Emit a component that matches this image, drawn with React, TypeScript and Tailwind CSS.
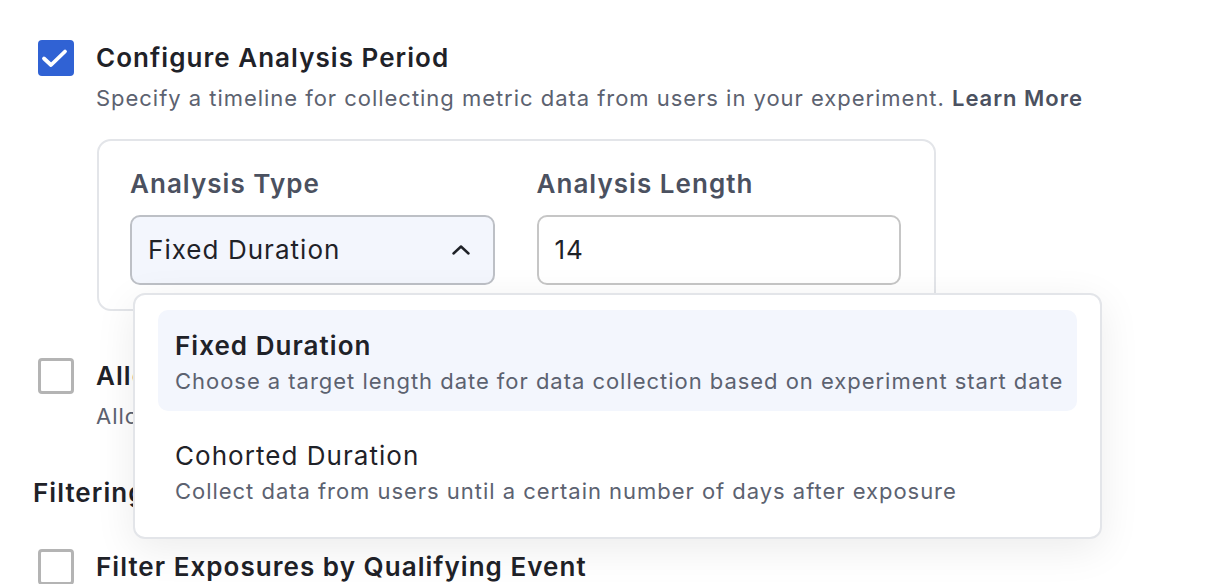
import { useState } from "react"

const options = [
  {
    id: "fixed",
    title: "Fixed Duration",
    description: "Choose a target length date for data collection based on experiment start date",
  },
  {
    id: "cohorted",
    title: "Cohorted Duration",
    description: "Collect data from users until a certain number of days after exposure",
  },
]

function Checkbox({ checked }: { checked?: boolean }) {
  if (checked) {
    return (
      <div className="h-[36px] w-[36px] shrink-0 rounded-[4px] bg-[#3062d4]">
        <svg width="36" height="36" viewBox="0 0 36 36" fill="none">
          <path d="M6 18.5 L13 25 L27 11.5" stroke="white" strokeWidth="3.8" strokeLinecap="round" strokeLinejoin="round" />
        </svg>
      </div>
    )
  }
  return <div className="h-[36px] w-[36px] shrink-0 rounded-[4px] border-[3px] border-[#b4b4b4] bg-white" />
}

export default function App() {
  const [selected] = useState("fixed")

  return (
    <div
      className="relative h-[584px] w-[1214px] overflow-hidden bg-white pl-[38px] pt-[40px] text-[#1f2228]"
      style={{ fontFamily: "Inter, 'Noto Sans', sans-serif" }}
    >
      <div className="flex gap-[22px]">
        <Checkbox checked />
        <div className="flex flex-col">
          <p className="text-[26px] font-semibold leading-[36px] tracking-[0.04em]">Configure Analysis Period</p>
          <p className="mt-[2px] text-[22px] leading-[40px] tracking-[0.044em] text-[#5c6270]">
            Specify a timeline for collecting metric data from users in your experiment.{" "}
            <span className="font-semibold text-[#4b5160]">Learn More</span>
          </p>
          <div className="mt-[21px] ml-px w-[839px] rounded-[14px] border-2 border-[#e3e5e9] pl-[31px] pr-[33px] pt-[25px] pb-[24px]">
            <div className="grid grid-cols-2 gap-[42px]">
              <div className="flex flex-col">
                <label className="text-[26px] font-semibold leading-[36px] tracking-[0.04em] text-[#4b5160]">Analysis Type</label>
                <div className="mt-[13px] flex h-[70px] items-center justify-between rounded-[10px] border-2 border-[#bdc0c6] bg-[#f3f6fd] pl-[16px] pr-[23px]">
                  <span className="text-[26px] leading-[36px] tracking-[0.04em]">Fixed Duration</span>
                  <svg width="18" height="10" viewBox="0 0 18 10" fill="none">
                    <path d="M1.5 8.5 L9 1.5 L16.5 8.5" stroke="#1f2228" strokeWidth="2.4" strokeLinecap="round" strokeLinejoin="round" />
                  </svg>
                </div>
              </div>
              <div className="flex flex-col">
                <label className="text-[26px] font-semibold leading-[36px] tracking-[0.04em] text-[#4b5160]">Analysis Length</label>
                <div className="mt-[13px] flex h-[70px] items-center rounded-[10px] border-2 border-[#c6c6c6] bg-white pl-[16px]">
                  <span className="text-[26px] leading-[36px] tracking-[0.04em]">14</span>
                </div>
              </div>
            </div>
          </div>
        </div>
      </div>

      <div className="mt-[47px] flex gap-[22px]">
        <Checkbox />
        <div className="flex flex-col">
          <p className="text-[26px] font-semibold leading-[36px] tracking-[0.04em]">Allow Exposure Re-entry</p>
          <p className="mt-[2px] text-[22px] leading-[40px] tracking-[0.044em] text-[#5c6270]">Allow users to re-enter the experiment after exposure</p>
        </div>
      </div>

      <p className="-ml-[5px] mt-[39px] text-[26px] font-semibold leading-[36px] tracking-[0.04em]">Filtering</p>

      <div className="mt-[38px] flex gap-[22px]">
        <Checkbox />
        <p className="text-[26px] font-semibold leading-[36px] tracking-[0.04em]">Filter Exposures by Qualifying Event</p>
      </div>

      <div className="absolute left-[133px] top-[293px] w-[969px] rounded-[12px] border-2 border-[#e3e5e9] bg-white px-[23px] pt-[15px] pb-[16px] shadow-[0_10px_40px_rgba(0,0,0,0.08)]">
        <div className="flex flex-col gap-[9px]">
          {options.map((o) => {
            const active = o.id === selected
            return (
              <div
                key={o.id}
                className={`rounded-[10px] pl-[17px] pt-[18px] pb-[14px] ${active ? "bg-[#f3f6fd]" : "bg-white"}`}
              >
                <p className={`text-[26px] leading-[36px] tracking-[0.04em] ${active ? "font-semibold" : "font-normal"}`}>{o.title}</p>
                <p className="mt-px text-[22px] leading-[32px] tracking-[0.044em] text-[#5c6270]">{o.description}</p>
              </div>
            )
          })}
        </div>
      </div>
    </div>
  )
}
